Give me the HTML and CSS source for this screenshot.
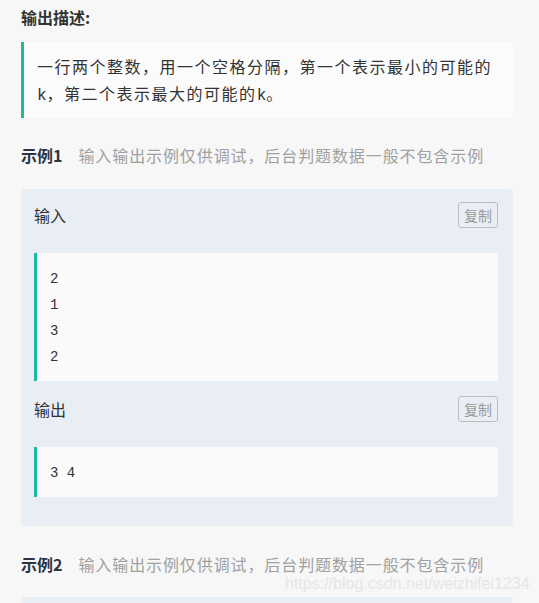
FILE: index.html
```html
<!DOCTYPE html>
<html lang="zh">
<head>
<meta charset="utf-8">
<link rel="stylesheet" href="styles.css">
</head>
<body>
<div class="page">
  <h3 class="title">输出描述:</h3>
  <blockquote class="desc">一行两个整数，用一个空格分隔，第一个表示最小的可能的<code>k</code>，第二个表示最大的可能的<code>k</code>。</blockquote>

  <div class="sample-head"><span class="sample-name">示例1</span><span class="sample-tip">输入输出示例仅供调试，后台判题数据一般不包含示例</span></div>
  <div class="sample-box">
    <div class="io-head"><span class="io-label">输入</span><span class="copy">复制</span></div>
    <pre class="code">2
1
3
2</pre>
    <div class="io-head io-head-2"><span class="io-label">输出</span><span class="copy">复制</span></div>
    <pre class="code">3 4</pre>
  </div>

  <div class="sample-head sample-head-2"><span class="sample-name">示例2</span><span class="sample-tip">输入输出示例仅供调试，后台判题数据一般不包含示例</span></div>
  <div class="sample-box sample-box-cut"></div>
  <div class="watermark">https://blog.csdn.net/weizhifei1234</div>
</div>
</body>
</html>
```
FILE: styles.css
```css
html, body {
  margin: 0;
  padding: 0;
  background: #f7f7f7;
}
body {
  font-family: "Noto Sans CJK SC", "Liberation Sans", sans-serif;
  color: #333;
  overflow: hidden;
  height: 603px;
}
.page {
  position: relative;
  padding: 0 26px 0 21px;
}
.title {
  margin: 0;
  padding-top: 6px;
  font-size: 16px;
  line-height: 22px;
  font-weight: bold;
  color: #333;
}
.desc {
  margin: 14px 0 0 0;
  padding: 11px 14px 8px 13px;
  background: #fbfbfb;
  border-left: 3px solid #1abc9c;
  font-size: 16px;
  line-height: 27px;
  letter-spacing: 1.5px;
  color: #333;
}
.desc code {
  font-family: "Liberation Mono", monospace;
  font-size: 16px;
  letter-spacing: 0;
}
.sample-head {
  display: flex;
  align-items: center;
  gap: 16px;
  margin-top: 25px;
  height: 24px;
  font-size: 16px;
}
.sample-name {
  font-weight: bold;
  color: #2b3544;
}
.sample-tip {
  color: #a0a0a0;
  letter-spacing: 0.9px;
}
.sample-box {
  margin-top: 22px;
  background: #e9eef5;
  border-radius: 4px;
  padding: 0 15px 29px 13px;
}
.io-head {
  display: flex;
  justify-content: space-between;
  align-items: center;
  padding: 13px 0 25px 0;
  height: 26px;
}
.io-head-2 {
  padding-top: 15px;
  padding-bottom: 25px;
}
.io-label {
  font-size: 16px;
  color: #333;
}
.copy {
  box-sizing: border-box;
  height: 26px;
  padding: 0 5px;
  border: 1px solid #bdbdbd;
  border-radius: 3px;
  font-size: 14px;
  line-height: 24px;
  color: #9a9a9a;
}
.code {
  margin: 0;
  padding: 13px 13px 11px 13px;
  background: #fafafa;
  border-left: 3px solid #1abc9c;
  font-family: "Liberation Mono", monospace;
  font-size: 14px;
  line-height: 26px;
  color: #333;
}
.sample-head-2 {
  margin-top: 26px;
}
.sample-box-cut {
  height: 6px;
  padding: 0;
  margin-top: 21px;
}
.watermark {
  position: absolute;
  left: 285px;
  top: 575px;
  font-family: "Liberation Sans", sans-serif;
  font-size: 16px;
  color: #e6e6e6;
  white-space: nowrap;
}
```
